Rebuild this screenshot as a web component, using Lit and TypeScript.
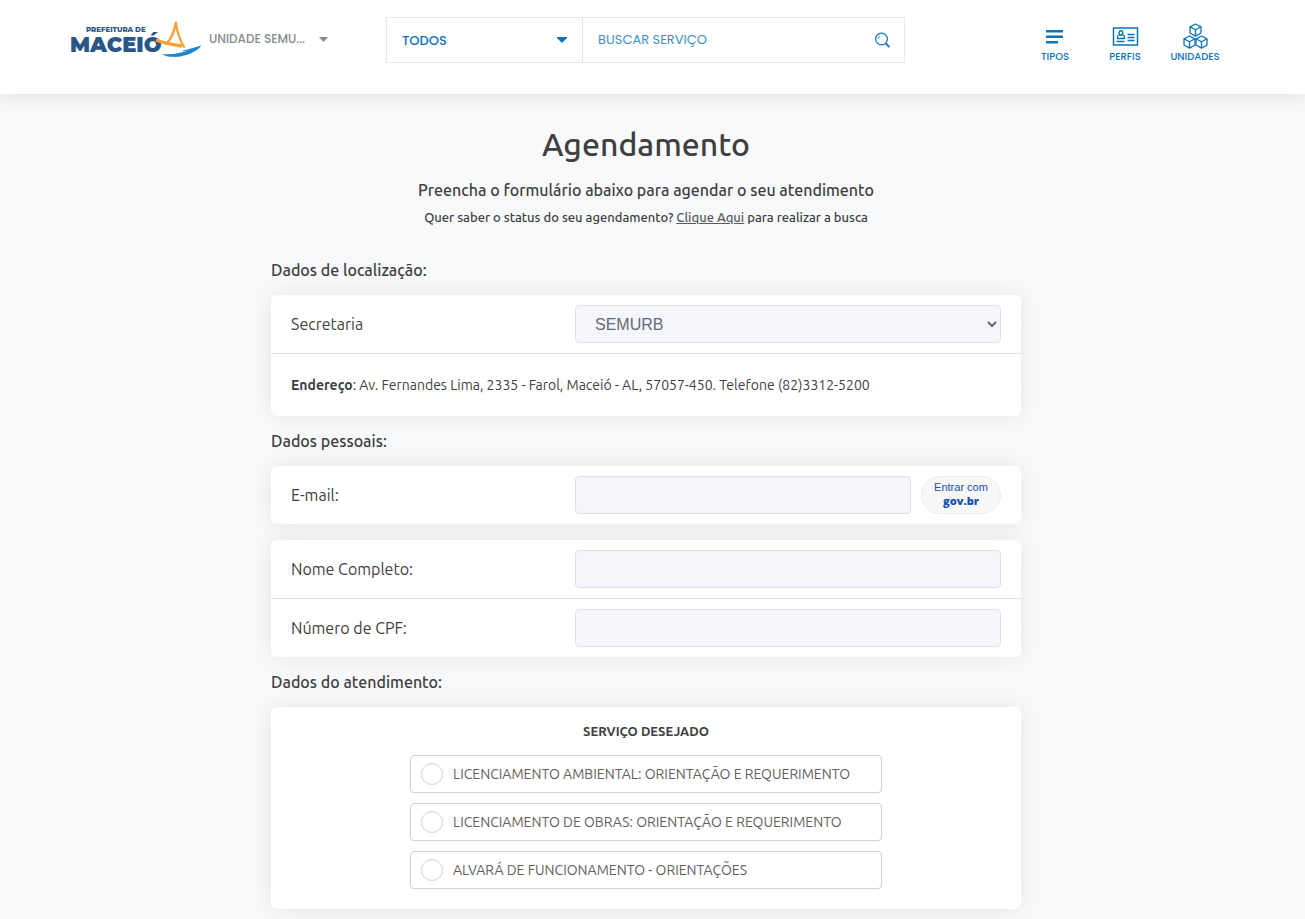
import { LitElement, html, css, svg } from "lit";
import { customElement, property } from "lit/decorators.js";

const cube = (x: number, y: number) => svg`
  <g transform="translate(${x} ${y})">
    <path d="M6.5 .5 12 3.3v6.2L6.5 12.6 1 9.5V3.3z M1 3.3 6.5 6.2 12 3.3 M6.5 6.2v6.4"/>
  </g>`;

@customElement("site-header")
export class SiteHeader extends LitElement {
  static styles = css`
    :host {
      display: block;
      position: relative;
      background: #fff;
      box-shadow: 0 0 20px rgba(0, 0, 0, 0.12);
      font-family: Poppins, Inter, "Open Sans", sans-serif;
      padding: 0 85px 0 70px;
    }
    .bar {
      max-width: 1150px;
      height: 94px;
      margin: 0 auto;
      display: flex;
      align-items: flex-start;
    }
    .brand {
      flex: 0 0 316px;
      display: flex;
      align-items: center;
      padding-top: 19px;
      gap: 7px;
    }
    .logo { display: block; }
    .prefix { font: 800 7px Montserrat, Inter, sans-serif; fill: #2b5688; }
    .city { font: 900 21px Montserrat, Inter, sans-serif; fill: #2b5688; }
    .unit {
      display: flex;
      align-items: center;
      gap: 14px;
      border: 0;
      padding: 0;
      background: none;
      color: #868b8e;
      font: 500 12px Poppins, Inter, sans-serif;
    }
    .search {
      flex: 0 1 519px;
      min-width: 0;
      display: flex;
      box-sizing: border-box;
      height: 46px;
      margin-top: 17px;
      border: 1px solid #e8e8e8;
      color: #0d73b8;
    }
    .kind {
      flex: 0 0 196px;
      display: grid;
      box-sizing: border-box;
      border-right: 1px solid #e8e8e8;
      align-items: center;
    }
    .kind select {
      grid-area: 1 / 1;
      height: 100%;
      appearance: none;
      border: 0;
      background: none;
      padding: 0 15px;
      color: inherit;
      font: 500 13px Poppins, Inter, sans-serif;
    }
    .kind svg {
      grid-area: 1 / 1;
      justify-self: end;
      margin-right: 15px;
      pointer-events: none;
    }
    .query {
      flex: 1;
      min-width: 0;
      border: 0;
      padding: 0 15px;
      background: none;
      color: inherit;
      font: 400 13px Poppins, Inter, sans-serif;
    }
    .query::placeholder { color: #3d92c9; opacity: 1; }
    .go {
      border: 0;
      background: none;
      padding: 0 13px;
      color: inherit;
      display: flex;
      align-items: center;
    }
    .menu {
      margin: 20px -10px 0 auto;
      display: flex;
    }
    .menu a {
      width: 70px;
      display: flex;
      flex-direction: column;
      align-items: center;
      gap: 1px;
      color: #0d73b8;
      text-decoration: none;
      font-size: 10px;
      line-height: 12px;
      font-weight: 500;
    }
  `;

  render() {
    return html`
      <div class="bar">
        <div class="brand">
          <svg class="logo" width="132" height="40" viewBox="0 0 132 40" role="img" aria-label="Prefeitura de Maceió">
            <text class="prefix" x="16" y="13">PREFEITURA DE</text>
            <text class="city" x="0" y="33">MACEIÓ</text>
            <path d="M86 21C94 24 104 26 112 27" fill="none" stroke="#f7a034" stroke-width="3.4"/>
            <path d="M96 25C102 20 104 13 105.800 3.500C107 12 109 20 114 28" fill="none" stroke="#f7a034" stroke-width="2.200" stroke-linejoin="round" stroke-linecap="round"/>
            <path d="M92 35C102 36 112 34 119 31L113 32.500V31.500C120 30 126 28 131 26.500C129 32 113 39 103 37.800C98 37.800 95 37 92 35Z" fill="#1d87cd"/>
          </svg>
          <button class="unit" type="button" aria-haspopup="listbox">
            UNIDADE SEMU...
            <svg width="9" height="5" viewBox="0 0 9 5"><path d="M0 0h9L4.500 5z" fill="#868b8e"/></svg>
          </button>
        </div>
        <form class="search" @submit=${(e: Event) => e.preventDefault()}>
          <div class="kind">
            <select aria-label="Tipo de busca"><option>TODOS</option></select>
            <svg width="10" height="6" viewBox="0 0 10 6"><path d="M0 0h10v1L5 6 0 1z" fill="#0d73b8"/></svg>
          </div>
          <input class="query" type="search" placeholder="BUSCAR SERVIÇO" aria-label="Buscar serviço">
          <button class="go" aria-label="Buscar">
            <svg width="17" height="17" viewBox="0 0 17 17" fill="none" stroke="#0d73b8" stroke-width="1.200">
              <circle cx="7.500" cy="7" r="5.900"/><path d="M11.800 11.500l3.700 3.700" stroke-width="1.800"/>
              <path d="M4 7A3.500 3.500 0 0 1 6 4" stroke-width=".8"/>
            </svg>
          </button>
        </form>
        <nav class="menu">
          <a href="#tipos">
            <svg width="28" height="30" viewBox="0 0 28 30"><path d="M5 10h17v2.500H5zM5 15.500h17V18H5zM5 21h12v2.500H5z" fill="#0d73b8"/></svg>
            TIPOS
          </a>
          <a href="#perfis">
            <svg width="28" height="30" viewBox="0 0 28 30" fill="none" stroke="#0d73b8">
              <rect x="2.500" y="8" width="24" height="17" stroke-width="1.500"/>
              <path d="M6.500 18.500v-2q0-1.500 2-1.700h3q2 .2 2 1.700v2zM5.500 21.500h8M16.500 14.500h7M16.500 17.500h7M16.500 20.500h7" stroke-width="1.300"/>
              <rect x="8.200" y="10.800" width="3.600" height="4.200" rx="1.700" stroke-width="1.500"/>
            </svg>
            PERFIS
          </a>
          <a href="#unidades">
            <svg width="28" height="30" viewBox="0 0 28 30" fill="none" stroke="#0d73b8" stroke-width="1.300" stroke-linejoin="round">
              ${cube(8, 3.5)}${cube(2, 15.5)}${cube(14, 15.5)}
            </svg>
            UNIDADES
          </a>
        </nav>
      </div>`;
  }
}

@customElement("service-option")
export class ServiceOption extends LitElement {
  @property() label = "";

  static styles = css`
    :host { display: block; }
    .option {
      box-sizing: border-box;
      min-height: 38px;
      display: flex;
      align-items: center;
      gap: 10px;
      padding: 0 10px;
      border: 1px solid #d0cfdb;
      border-radius: 4px;
      color: #5f5f5f;
      font-size: 14px;
    }
    .radio {
      appearance: none;
      flex: none;
      width: 22px;
      height: 22px;
      margin: 0;
      border: 1px solid #d0cfdb;
      border-radius: 50%;
      background: #fff;
    }
    .radio:checked { box-shadow: inset 0 0 0 5px #fff; background: #0d73b8; }
  `;

  render() {
    return html`<label class="option"><input class="radio" type="radio" name="servico">${this.label}</label>`;
  }
}

@customElement("app-root")
export class AppRoot extends LitElement {
  static styles = css`
    :host {
      display: block;
      min-height: 100vh;
      background: #f8f9fb;
      color: #3f3f3f;
      font-family: Ubuntu, "Noto Sans", sans-serif;
      font-size: 16px;
    }
    .page {
      padding: 29px 13px 10px 0;
    }
    .column {
      box-sizing: border-box;
      max-width: 750px;
      margin: 0 auto;
    }
    .intro { text-align: center; }
    h1 { margin: 0; font-size: 32px; line-height: 42px; font-weight: 550; }
    .lead { margin: 11px 0 0; font-size: 16px; line-height: 28px; font-weight: 550; }
    .hint { margin: 0 0 15px; font-size: 13px; line-height: 26px; font-weight: 550; }
    .hint a { color: #5a5a5a; }
    h2 { margin: 0; font-size: 16px; line-height: 50px; font-weight: 550; }
    .card {
      background: #fff;
      border-radius: 6px;
      box-shadow: 0 0 25px rgba(0, 0, 0, 0.08);
    }
    .card + .card { margin-top: 16px; }
    .row {
      display: flex;
      align-items: center;
      padding: 10px 20px;
    }
    .row + .row { border-top: 1px solid #e3e3e6; }
    .row label { flex: 0 0 40%; }
    .field {
      flex: 1;
      min-width: 0;
      height: 38px;
      box-sizing: border-box;
      border: 1px solid #dfdfe9;
      border-radius: 4px;
      background: #f5f6fb;
      color: #646a7a;
      padding: 0 15px;
      font: 16px "Liberation Sans", Arial, sans-serif;
    }
    .address { font-size: 14px; line-height: 42px; }
    .address p { margin: 0; }
    .address b { font-weight: 600; }
    .gov {
      flex: none;
      width: 80px;
      height: 38px;
      margin-left: 10px;
      padding: 0 0 2px;
      border: 1px solid #ececec;
      border-radius: 19px;
      background: #f8f8f8;
      color: #1351b4;
      font: 11px/14px "Liberation Sans", Arial, sans-serif;
    }
    .gov b { display: block; font-family: "Open Sans", sans-serif; font-weight: 800; }
    .services {
      display: flex;
      flex-direction: column;
      align-items: center;
      gap: 10px;
      padding: 15px 20px 20px;
      margin: 0;
    }
    .services h3 { margin: 0 0 5px; font-size: 13px; line-height: 18px; font-weight: 600; }
    .services service-option { width: 100%; max-width: 472px; }
  `;

  private services = [
    "LICENCIAMENTO AMBIENTAL: ORIENTAÇÃO E REQUERIMENTO",
    "LICENCIAMENTO DE OBRAS: ORIENTAÇÃO E REQUERIMENTO",
    "ALVARÁ DE FUNCIONAMENTO - ORIENTAÇÕES",
  ];

  render() {
    return html`
      <site-header></site-header>
      <main class="page">
        <div class="column">
          <div class="intro">
            <h1>Agendamento</h1>
            <p class="lead">Preencha o formulário abaixo para agendar o seu atendimento</p>
            <p class="hint">Quer saber o status do seu agendamento? <a href="#busca">Clique Aqui</a> para realizar a busca</p>
          </div>

          <h2>Dados de localização:</h2>
          <section class="card">
            <div class="row">
              <label for="secretaria">Secretaria</label>
              <select class="field" id="secretaria"><option>SEMURB</option></select>
            </div>
            <div class="row address">
              <p><b>Endereço</b>: Av. Fernandes Lima, 2335 - Farol, Maceió - AL, 57057-450. Telefone (82)3312-5200</p>
            </div>
          </section>

          <h2>Dados pessoais:</h2>
          <section class="card">
            <div class="row">
              <label for="email">E-mail:</label>
              <input class="field" id="email" type="email">
              <button class="gov" type="button">Entrar com <b>gov.br</b></button>
            </div>
          </section>
          <section class="card">
            <div class="row">
              <label for="nome">Nome Completo:</label>
              <input class="field" id="nome" type="text">
            </div>
            <div class="row">
              <label for="cpf">Número de CPF:</label>
              <input class="field" id="cpf" type="text">
            </div>
          </section>

          <h2>Dados do atendimento:</h2>
          <section class="card services">
            <h3>SERVIÇO DESEJADO</h3>
            ${this.services.map((s) => html`<service-option .label=${s}></service-option>`)}
          </section>
        </div>
      </main>`;
  }
}
